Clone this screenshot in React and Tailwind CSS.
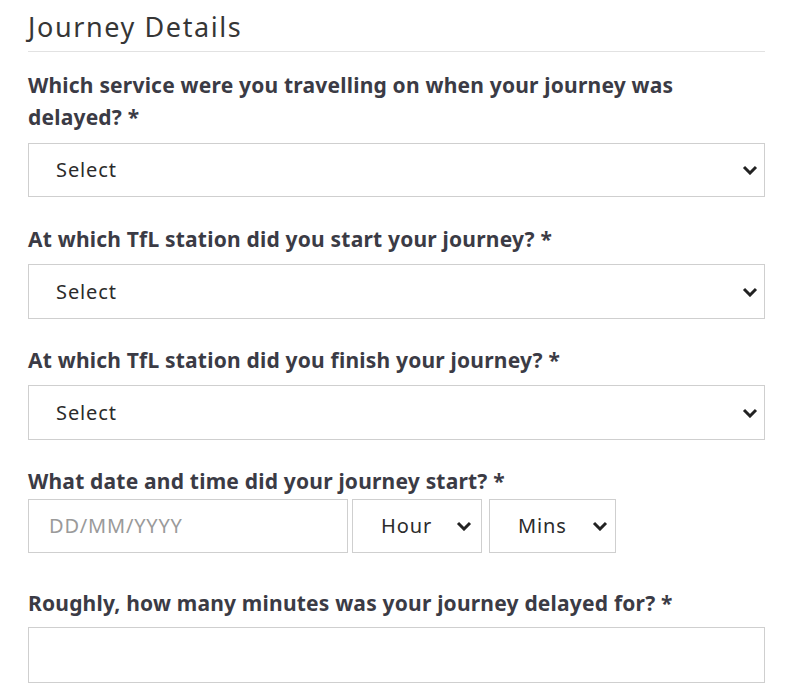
import React from 'react';

const Chevron = () => (
    <svg width="16" height="10" viewBox="0 0 16 10" className="pointer-events-none">
        <path d="M2 2l6 6 6-6" fill="none" stroke="#222" strokeWidth="3" />
    </svg>
);

const Label = ({ children, className = '' }) => (
    <label className={`block text-[21px] font-bold leading-[32px] tracking-[0.2px] text-[#3b3b45] ${className}`}>
        {`${children} *`}
    </label>
);

const SelectBox = ({ label, className = '', textClass = 'pl-[27px]', chevronClass = 'right-[6px]' }) => (
    <div className={`relative flex items-center border border-[#cfcfcf] bg-white ${className}`}>
        <span className={`text-[20px] tracking-[0.9px] text-[#2b2b2b] ${textClass}`}>{label}</span>
        <div className={`absolute top-1/2 -translate-y-1/2 ${chevronClass}`}>
            <Chevron />
        </div>
    </div>
);

const App = () => {
    return (
        <div className="min-h-[699px] bg-white font-['Noto_Sans','Open_Sans',sans-serif]">
            <div className="ml-[28px] w-[737px] pt-[8px]">
                <h2 className="text-[27px] leading-[38px] tracking-[1.6px] text-[#363636]">Journey Details</h2>
                <div className="mt-[5px] h-px bg-[#e2e2e2]" />

                <Label className="mt-[17px]">Which service were you travelling on when your journey was delayed?</Label>
                <SelectBox label="Select" className="mt-[10px] h-[54px]" />

                <Label className="mt-[26px]">At which TfL station did you start your journey?</Label>
                <SelectBox label="Select" className="mt-[9px] h-[55px]" />

                <Label className="mt-[25px]">At which TfL station did you finish your journey?</Label>
                <SelectBox label="Select" className="mt-[9px] h-[55px]" />

                <Label className="mt-[25px]">What date and time did your journey start?</Label>
                <div className="mt-[2px] flex h-[54px]">
                    <div className="flex w-[320px] items-center border border-[#cfcfcf] pl-[20px] text-[20px] tracking-[0.8px] text-[#9a9a9a]">
                        DD/MM/YYYY
                    </div>
                    <SelectBox label="Hour" className="ml-[4px] w-[130px]" textClass="pl-[28px]" chevronClass="right-[9px]" />
                    <SelectBox label="Mins" className="ml-[7px] w-[127px]" textClass="pl-[28px]" chevronClass="right-[7px]" />
                </div>

                <Label className="mt-[34px]">Roughly, how many minutes was your journey delayed for?</Label>
                <div className="mt-[8px] h-[56px] border border-[#cfcfcf]" />
            </div>
        </div>
    );
};

export default App;
